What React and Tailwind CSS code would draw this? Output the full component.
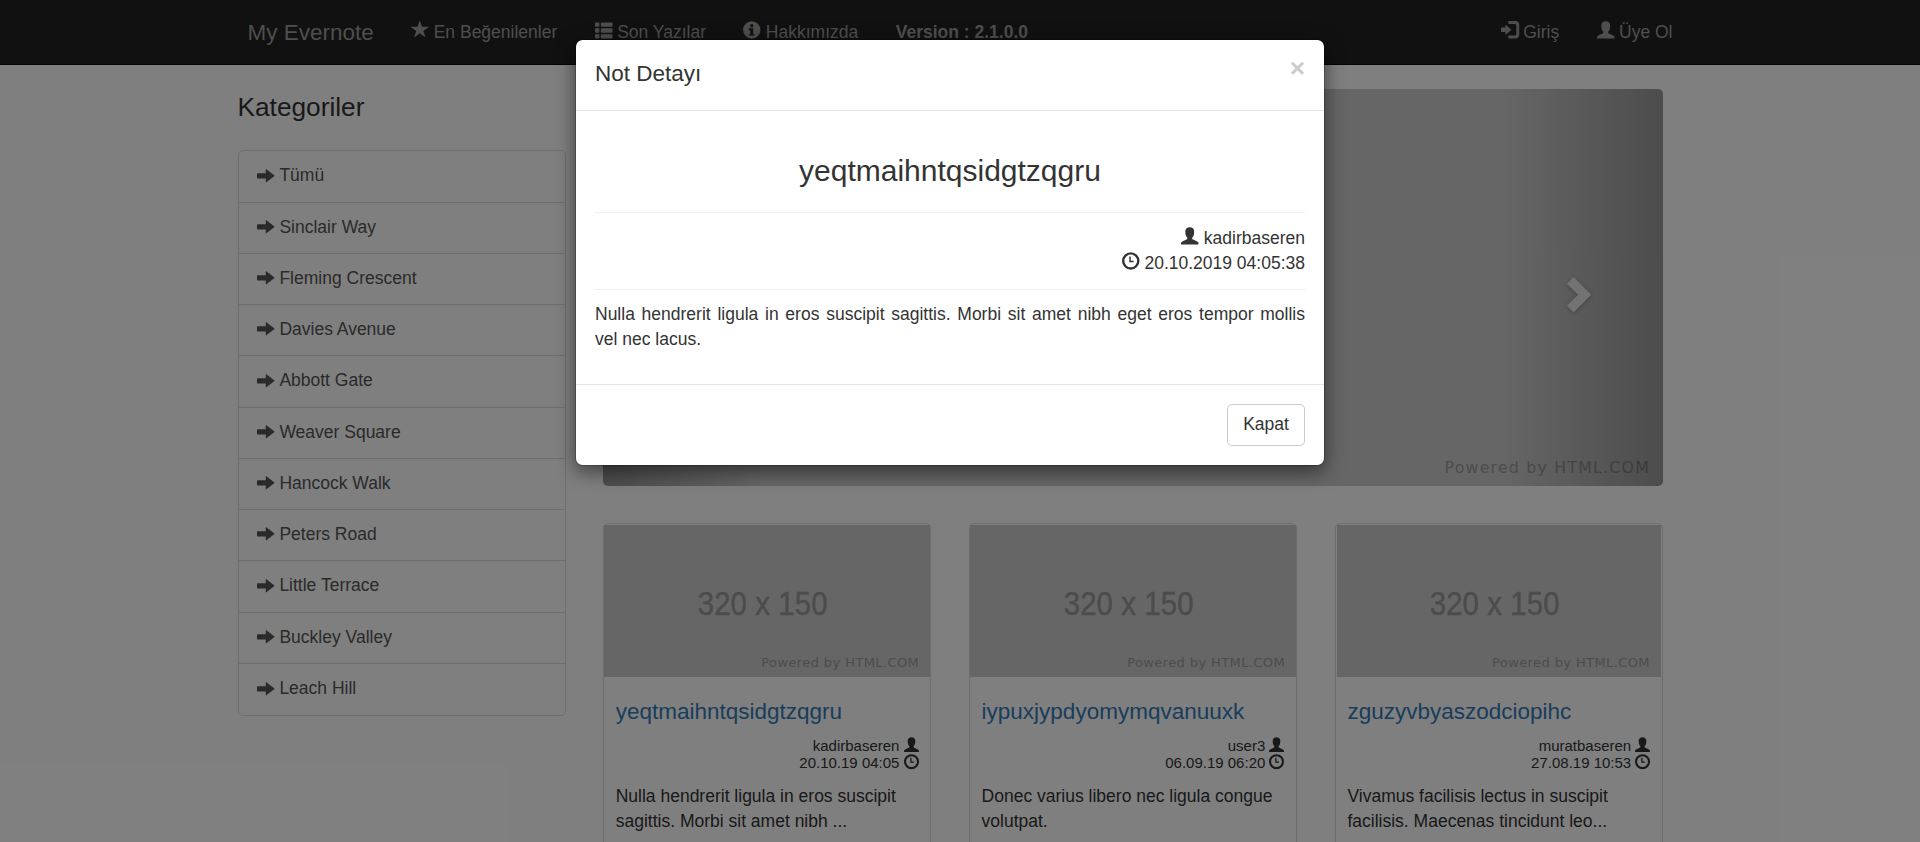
const GLYPHS = {
  star: 'M600 1255L748 812H1240L845 522L992 75L600 352L208 75L355 522L-40 812H452Z',
  list: 'M50 0H250Q300 0 300 50V250Q300 300 250 300H50Q0 300 0 250V50Q0 0 50 0ZM450 0H1150Q1200 0 1200 50V250Q1200 300 1150 300H450Q400 300 400 250V50Q400 0 450 0ZM50 400H250Q300 400 300 450V650Q300 700 250 700H50Q0 700 0 650V450Q0 400 50 400ZM450 400H1150Q1200 400 1200 450V650Q1200 700 1150 700H450Q400 700 400 650V450Q400 400 450 400ZM50 800H250Q300 800 300 850V1050Q300 1100 250 1100H50Q0 1100 0 1050V850Q0 800 50 800ZM450 800H1150Q1200 800 1200 850V1050Q1200 1100 1150 1100H450Q400 1100 400 1050V850Q400 800 450 800Z',
  info: 'M600 1177A593 593 0 1 0 600 -9A593 593 0 1 0 600 1177ZM500 800V950Q500 975 525 975H675Q700 975 700 950V800Q700 775 675 775H525Q500 775 500 800ZM400 575V675Q400 700 425 700H675Q700 700 700 675V300H775Q800 300 800 275V225Q800 200 775 200H425Q400 200 400 225V275Q400 300 425 300H500V550H425Q400 550 400 575Z',
  user: 'M600 1190C420 1190 300 1090 300 920V800C300 640 360 530 430 480V400C430 385 425 375 410 368L90 210C30 175 0 140 0 80V30Q0 0 30 0H1170Q1200 0 1200 30V80C1200 140 1170 175 1110 210L790 368C775 375 770 385 770 400V480C840 530 900 640 900 800V920C900 1090 780 1190 600 1190Z',
  time: 'M600 1190A600 600 0 1 0 600 -10A600 600 0 1 0 600 1190ZM600 1025A435 435 0 1 1 600 155A435 435 0 1 1 600 1025ZM500 900H600V600H800V500H500Z',
  arrow: 'M0 470V730Q0 780 50 780H600V1030Q600 1080 640 1045L1180 630Q1215 600 1180 570L640 155Q600 120 600 170V420H50Q0 420 0 470Z',
  login: 'M550 1200H1000Q1100 1200 1175 1125Q1250 1050 1250 950V250Q1250 150 1175 75Q1100 0 1000 0H550Q500 0 500 50V150Q500 200 550 200H950Q1050 200 1050 300V900Q1050 1000 950 1000H550Q500 1000 500 1050V1150Q500 1200 550 1200ZM0 500V700Q0 750 50 750H300V900Q300 950 340 920L685 630Q710 600 685 570L340 280Q300 250 300 300V450H50Q0 450 0 500Z',
  chevron: 'M400 1165L965 600L400 35L190 245L545 600L190 955Z',
};

function Glyph({ name, className = 'align-[-0.06em]' }) {
  return (
    <svg viewBox="0 0 1200 1200" className={'inline-block size-[1em] overflow-visible ' + className} fill="currentColor" fillRule="evenodd">
      <g transform="translate(0 1200) scale(1 -1)">
        <path d={GLYPHS[name]} />
      </g>
    </svg>
  );
}

const CATEGORIES = ['Tümü', 'Sinclair Way', 'Fleming Crescent', 'Davies Avenue', 'Abbott Gate', 'Weaver Square', 'Hancock Walk', 'Peters Road', 'Little Terrace', 'Buckley Valley', 'Leach Hill'];

const NOTES = [
  { title: 'yeqtmaihntqsidgtzqgru', user: 'kadirbaseren', date: '20.10.19 04:05', lines: ['Nulla hendrerit ligula in eros suscipit', 'sagittis. Morbi sit amet nibh ...'] },
  { title: 'iypuxjypdyomymqvanuuxk', user: 'user3', date: '06.09.19 06:20', lines: ['Donec varius libero nec ligula congue', 'volutpat.'] },
  { title: 'zguzyvbyaszodciopihc', user: 'muratbaseren', date: '27.08.19 10:53', lines: ['Vivamus facilisis lectus in suscipit', 'facilisis. Maecenas tincidunt leo...'] },
];

function NavItem({ icon, children }) {
  return (
    <a className="px-[18.75px] pt-5 leading-[25px] whitespace-nowrap text-[#9d9d9d]">
      {icon && <Glyph name={icon} className="align-[-0.04em]" />} {children}
    </a>
  );
}

function Navbar() {
  return (
    <nav className="h-[65px] border-b border-[#080808] bg-[#222]">
      <div className="mx-auto flex w-[1462.5px] items-start">
        <a className="px-[18.75px] pt-5 text-[22.5px] leading-[25px] text-[#9d9d9d]">My Evernote</a>
        <NavItem icon="star">En Beğenilenler</NavItem>
        <NavItem icon="list">Son Yazılar</NavItem>
        <NavItem icon="info">Hakkımızda</NavItem>
        <NavItem><b>Version : 2.1.0.0</b></NavItem>
        <div className="ml-auto flex">
          <NavItem icon="login">Giriş</NavItem>
          <NavItem icon="user">Üye Ol</NavItem>
        </div>
      </div>
    </nav>
  );
}

function Sidebar() {
  return (
    <aside className="w-[328.1px] shrink-0">
      <p className="mb-[25px] text-[26.25px] leading-[36.75px] text-[#333]">Kategoriler</p>
      <div className="divide-y divide-[#ddd] rounded-[5px] border border-[#ddd]">
        {CATEGORIES.map((name) => (
          <a key={name} className="flex h-[51.25px] items-center gap-[4.9px] px-[18.5px] pb-[1px] text-[#555]">
            <Glyph name="arrow" className="mb-px" />
            <span>{name}</span>
          </a>
        ))}
      </div>
    </aside>
  );
}

function Carousel() {
  return (
    <div className="relative h-[397.3px] overflow-hidden rounded-[5px] bg-[#ccc]">
      <span className="absolute right-[13px] bottom-[8px] font-['DejaVu_Sans'] text-[15.8px] leading-5 tracking-[1.2px] text-[#999]">Powered by HTML.COM</span>
      <div className="absolute inset-y-0 left-0 w-[15%] bg-[linear-gradient(to_right,rgba(0,0,0,.5),rgba(0,0,0,.0001))] opacity-50" />
      <div className="absolute inset-y-0 right-0 w-[15%] bg-[linear-gradient(to_right,rgba(0,0,0,.0001),rgba(0,0,0,.5))] text-[37.5px] text-white opacity-50">
        <Glyph name="chevron" className="absolute top-[187px] left-[57px] drop-shadow-[0_1px_2px_rgba(0,0,0,0.6)]" />
      </div>
    </div>
  );
}

function NoteCard({ note }) {
  return (
    <article className="group h-[400px] w-[328.1px] rounded-[5px] border border-[#ddd] bg-white pt-px">
      <div className="relative flex h-[152px] items-center justify-center bg-[#ccc] pt-[3px] pr-[8px] group-last:mx-px">
        <span className="scale-x-[0.87] text-[34px] leading-none whitespace-nowrap text-[#999] [-webkit-text-stroke:0.5px_#999]">320 x 150</span>
        <span className="absolute right-[11px] bottom-[6px] font-['DejaVu_Sans'] text-[13px] leading-4 tracking-[0.4px] text-[#999]">Powered by HTML.COM</span>
      </div>
      <div className="px-[11.6px] pt-[22px]">
        <h4 className="text-[22.5px] leading-[25px] text-[#337ab7]">{note.title}</h4>
        <div className="mt-[13px] text-right text-[15px] leading-[17px]">
          <div>{note.user} <Glyph name="user" /></div>
          <div>{note.date} <Glyph name="time" /></div>
        </div>
        <p className="mt-[12.5px] leading-[25px] whitespace-nowrap">{note.lines[0]}<br />{note.lines[1]}</p>
      </div>
    </article>
  );
}

function Modal() {
  return (
    <div className="mt-[39px] ml-[575px] h-[427px] w-[750px] rounded-[7.5px] border border-black/20 bg-white bg-clip-padding shadow-[0_6px_19px_rgba(0,0,0,0.5)]">
      <div className="flex h-[71px] justify-between border-b border-[#e5e5e5] px-[19px] pt-[15px]">
        <h4 className="pt-[3px] text-[22.5px] leading-[32px]">Not Detayı</h4>
        <button className="h-[26px] text-[26.25px] leading-[26px] font-bold text-[#ccc]">×</button>
      </div>
      <div className="flex h-[273px] flex-col px-[19px]">
        <h2 className="mt-[43px] text-center text-[30px] leading-[33px]">yeqtmaihntqsidgtzqgru</h2>
        <hr className="mt-[25px] border-[#eee]" />
        <div className="mt-[13px] text-right leading-[25px]">
          <div><Glyph name="user" className="align-[-0.04em]" /> kadirbaseren</div>
          <div><Glyph name="time" className="align-[-0.04em]" /> 20.10.2019 04:05:38</div>
        </div>
        <hr className="mt-[13px] border-[#eee]" />
        <p className="mt-[12px] text-justify leading-[25px]">Nulla hendrerit ligula in eros suscipit sagittis. Morbi sit amet nibh eget eros tempor mollis vel nec lacus.</p>
      </div>
      <div className="flex justify-end border-t border-[#e5e5e5] px-[19px] pt-[19px]">
        <button className="h-[42px] w-[78px] rounded-[5px] border border-[#ccc] bg-white pb-0.5 text-[#333]">Kapat</button>
      </div>
    </div>
  );
}

export default function App() {
  return (
    <div className="relative h-[842px] overflow-hidden bg-white font-['Liberation_Sans',Arial,sans-serif] text-[17.5px] leading-[25px] text-[#333]">
      <Navbar />
      <main className="mt-[23.5px] flex gap-[37.5px] pl-[237.5px]">
        <Sidebar />
        <section className="w-[1059.9px] shrink-0">
          <Carousel />
          <div className="mt-[37.5px] flex justify-between">
            {NOTES.map((note) => <NoteCard key={note.title} note={note} />)}
          </div>
        </section>
      </main>
      <div className="absolute inset-0 bg-black/50" />
      <div className="absolute inset-0">
        <Modal />
      </div>
    </div>
  );
}
